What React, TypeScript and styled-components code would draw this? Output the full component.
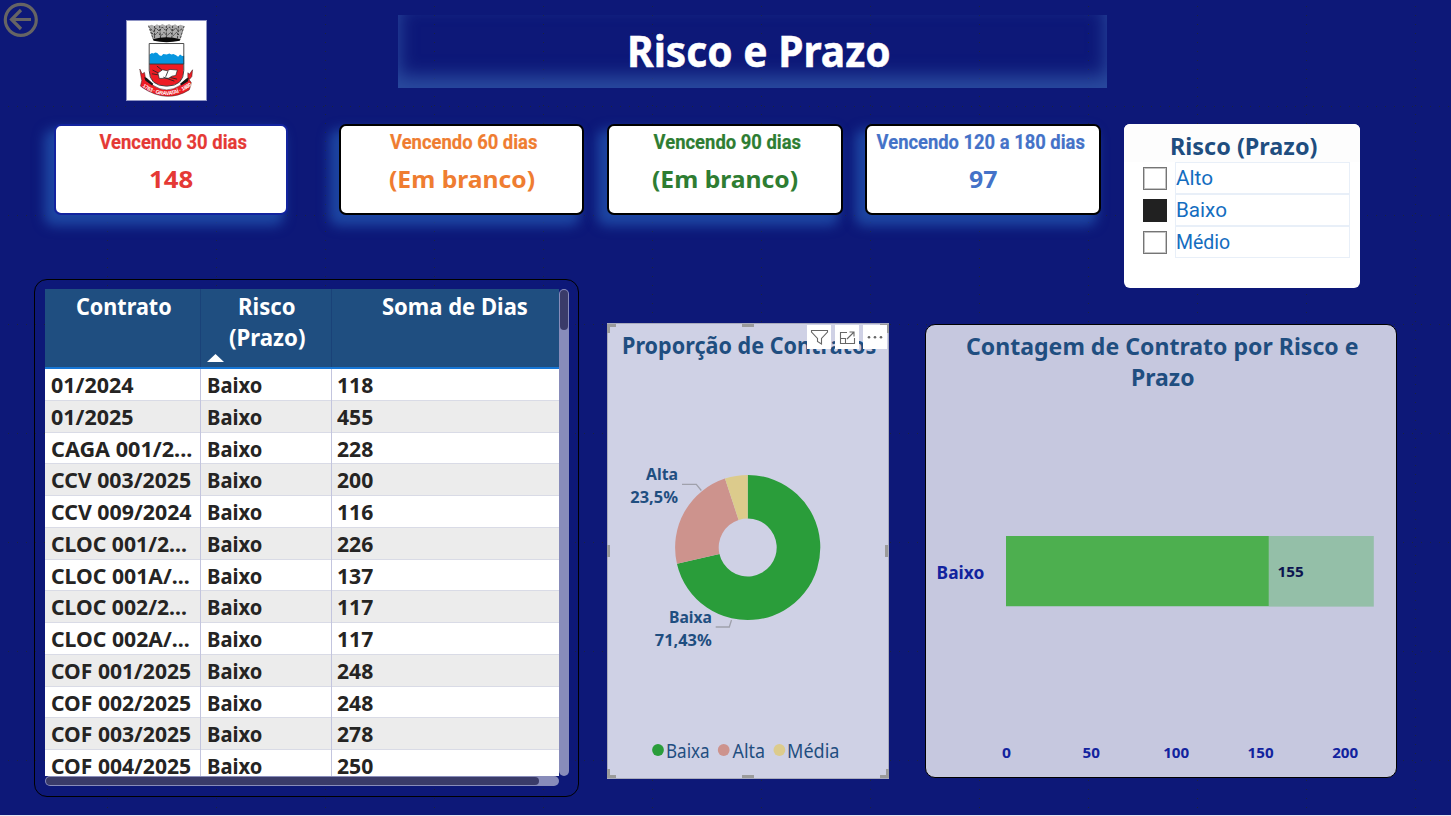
import React, { useLayoutEffect, useRef, useState } from "react";
import styled, { createGlobalStyle } from "styled-components";

const SANS = `"Noto Sans", "Open Sans", sans-serif`;
const DIN = `Roboto, "Liberation Sans", sans-serif`;

const GlobalStyle = createGlobalStyle`
  *, *::before, *::after { box-sizing: border-box; }
  body { margin: 0; font-family: ${SANS}; background: #0d1878; }
`;

/* ---------- text that fills a given width ---------- */

const FitBox = styled.span<{ $w: number }>`
  display: inline-block;
  width: ${(p) => p.$w}px;
  text-align: left;
  white-space: nowrap;
  vertical-align: top;
`;
const FitInner = styled.span`
  display: inline-block;
  transform-origin: 0 50%;
`;

function Fit({ w, children }: { w: number; children: React.ReactNode }) {
  const ref = useRef<HTMLSpanElement>(null);
  const [scale, setScale] = useState(1);
  useLayoutEffect(() => {
    if (ref.current) setScale(w / ref.current.offsetWidth);
  }, [w]);
  return (
    <FitBox $w={w}>
      <FitInner ref={ref} style={{ transform: `scaleX(${scale})` }}>
        {children}
      </FitInner>
    </FitBox>
  );
}

/* ---------- page ---------- */

const Page = styled.main`
  width: 1451px;
  height: 816px;
  overflow: hidden;
  display: flex;
  flex-direction: column;
  border-bottom: 1px solid #e6e6f0;
  background-color: #0d1878;
  background-image: radial-gradient(circle at 0.5px 0.5px, #1a2240 0.9px, transparent 1px),
    radial-gradient(circle at 0.5px 0.5px, #1a2240 0.9px, transparent 1px);
  background-size: 109px 9px, 9px 109px;
  background-position: 107px 6px, 8px 106px;
`;

const Header = styled.header`
  display: flex;
  align-items: flex-start;
  height: 124px;
  flex: none;
`;
const BackButton = styled.button`
  margin: 2px 0 0 3px;
  padding: 0;
  border: 0;
  background: none;
  width: 36px;
  height: 36px;
  svg { display: block; }
`;
const LogoBox = styled.div`
  margin: 20px 0 0 87px;
  width: 81px;
  height: 81px;
  background: #fff;
  border: 1px solid #8f94c4;
  svg { display: block; margin: -1px; }
`;
const TitleBanner = styled.h1`
  margin: 15px 0 0 191px;
  width: 709px;
  height: 73px;
  padding-left: 12px;
  text-align: center;
  color: #fff;
  font-size: 42.2px;
  font-weight: 700;
  line-height: 71px;
  -webkit-text-stroke: 0.5px #fff;
  box-shadow: inset 0 -11px 18px 1px #2a4b9f;
`;

/* ---------- indicator cards ---------- */

const TopRow = styled.section`
  display: flex;
  align-items: flex-start;
  gap: 23px;
  height: 155px;
  padding-left: 54px;
  flex: none;
`;
const Card = styled.article<{ $w: number; $color: string; $edge: string; $after?: number }>`
  width: ${(p) => p.$w}px;
  height: 91px;
  margin-right: ${(p) => p.$after ?? 0}px;
  border: 2px solid ${(p) => p.$edge};
  border-radius: 7px;
  background: #fff;
  color: ${(p) => p.$color};
  text-align: center;
  box-shadow: -7px 8px 12px 3px #1d45a2;
`;
const CardTitle = styled.div<{ $shift: number }>`
  font: 700 20px/32px ${DIN};
  transform: translateX(${(p) => p.$shift}px);
  -webkit-text-stroke: 0.2px currentColor;
`;
const CardValue = styled.div`
  font-size: 24px;
  font-weight: 700;
  line-height: 42px;
`;

/* ---------- slicer ---------- */

const Slicer = styled.aside`
  width: 236px;
  height: 164px;
  border-radius: 6px;
  overflow: hidden;
  background: #fff;
`;
const SlicerTitle = styled.div`
  height: 38px;
  padding-left: 4px;
  background: #fdfdfd;
  text-align: center;
  color: #1f4e80;
  font-size: 23.5px;
  font-weight: 700;
  line-height: 44px;
`;
const Option = styled.label`
  display: flex;
  align-items: center;
  height: 32px;
  padding-left: 19px;
`;
const Check = styled.span<{ $on?: boolean }>`
  width: 23.5px;
  height: 23px;
  margin-right: 8.5px;
  border: ${(p) => (p.$on ? 0 : 1)}px solid #757575;
  box-shadow: ${(p) => (p.$on ? "none" : "inset 0 0 0 1px #c4c4c4")};
  background: ${(p) => (p.$on ? "#212121" : "#fff")};
`;
const OptionText = styled.span`
  width: 175px;
  height: 32px;
  border: 1px solid #e8eff8;
  color: #146dbf;
  font: 400 20px/31px ${DIN};
`;

/* ---------- lower row ---------- */

const BottomRow = styled.section`
  display: flex;
  align-items: flex-start;
  padding-left: 34px;
`;
const TablePanel = styled.div`
  width: 545px;
  height: 518px;
  padding: 9px 0 0 10px;
  border: 1px solid #000;
  border-radius: 13px;
`;
const TableRow = styled.div`
  display: flex;
`;
const Grid = styled.div`
  width: 513.5px;
  height: 487px;
  overflow: hidden;
`;
const GridHead = styled.div`
  display: grid;
  grid-template-columns: 156px 131px 227px;
  height: 80px;
  background: #1f4e80;
  border-bottom: 2px solid #1676d6;
`;
const HeadCell = styled.div<{ $pad?: number }>`
  position: relative;
  padding-top: 2px;
  padding-left: ${(p) => p.$pad ?? 2}px;
  border-right: 1px solid #1a4278;
  text-align: center;
  color: #fff;
  font-size: 22.4px;
  font-weight: 700;
  line-height: 31px;
  &:last-child { border-right: 0; }
`;
const SortMark = styled.svg`
  position: absolute;
  left: 6px;
  top: 65px;
`;
const GridLine = styled.div<{ $alt: boolean }>`
  display: grid;
  grid-template-columns: 156px 131px 227px;
  height: 31.77px;
  background: ${(p) => (p.$alt ? "#ececec" : "#fff")};
  border-bottom: 1px solid #d9dbe6;
`;
const Cell = styled.div`
  padding-left: 5.6px;
  border-right: 1px solid #c3c5de;
  color: #252423;
  font-size: 20.8px;
  font-weight: 700;
  line-height: 32px;
  &:last-child { border-right: 0; padding-left: 5px; }
`;
const VTrack = styled.div`
  width: 10px;
  height: 487px;
  padding: 1px;
  border-radius: 5px;
  background: #888cba;
`;
const VThumb = styled.div`
  height: 40px;
  border-radius: 4px;
  background: #3a3b69;
`;
const HTrack = styled.div`
  width: 514px;
  height: 10px;
  padding: 1px;
  border-radius: 5px;
  background: #888cba;
`;
const HThumb = styled.div`
  width: 493px;
  height: 8px;
  border-radius: 4px;
  background: #3a3b69;
`;

const DonutPanel = styled.div`
  position: relative;
  margin: 44px 0 0 28px;
  width: 282px;
  height: 456px;
  background: #cfd1e5;
  border: 1px solid #a9abbd;
`;
const PanelTitle = styled.h2<{ $top: number; $left: number }>`
  margin: 0;
  padding: ${(p) => p.$top}px 0 0 ${(p) => p.$left}px;
  text-align: center;
  color: #1f4e80;
  font-size: 22.6px;
  font-weight: 700;
  line-height: 31px;
`;
const Overlay = styled.svg`
  position: absolute;
  left: -1px;
  top: -1px;
`;
const Tools = styled.div`
  position: absolute;
  right: 1px;
  top: 1px;
  display: flex;
  gap: 4px;
`;
const Tool = styled.button`
  width: 24px;
  height: 24px;
  padding: 0;
  border: 0;
  background: #fff;
  svg { display: block; }
`;
const BarPanel = styled.div`
  position: relative;
  margin: 45px 0 0 36px;
  width: 472px;
  height: 454px;
  background: #c6c8df;
  border: 1px solid #000;
  border-radius: 10px;
`;

/* ---------- drawings ---------- */

const Crest = () => (
  <svg width="81" height="81" viewBox="0 0 241 241">
    <path d="M67 17 L77 14 L84 18 L92 13 L100 17 L108 12 L118 17 L128 12 L137 17 L146 13 L154 18 L162 14 L173 18 L162 57 Q120 70 80 57Z" fill="#adadad" />
    <path d="M72 26l10 8 7-10 10 9 9-12 10 10 11-10 9 12 10-9 8 10 11-8M76 38l9 8 9-9 10 10 9-10 9 10 10-10 9 9 9-9 8 8M85 18v36M100 17l3 40M120 17v42M139 17l-3 40M156 18l-3 37M67 17l14 40M173 18l-12 39" stroke="#222" strokeWidth="2.4" fill="none" strokeDasharray="7 3" />
    <path d="M80 57 Q120 46 162 57 L160 62 Q120 70 82 62Z" fill="#080808" />
    <path d="M69 70H172V150Q172 196 121 197Q69 196 69 150Z" fill="#fff" />
    <path d="M70 103l7-5 5 2 5-3 6 1 6 7 6 2 6-6 10 2 8-3 6 3 6-2 8 4 6 4 6-6 6 4 6-1V131H70Z" fill="#0796df" />
    <path d="M70 131H171V150Q171 195 121 196Q70 195 70 150Z" fill="#ed1c24" />
    <path d="M69 131H172M69 70H172V150Q172 196 121 197Q69 196 69 150Z" fill="none" stroke="#333" strokeWidth="2.6" />
    <path d="M95 158l14-10 14 3 8-4 22 2-5 16-11 2-10 6-28 1Z" fill="#fff" stroke="#222" strokeWidth="2" />
    <path d="M79 149l16 8M77 160l18 3M92 137l15 12M111 170l33 12M125 152l-7 17M132 171l20 5" stroke="#222" strokeWidth="2.5" />
    <path d="M41 146l7 14 7-4 3 17 14 12 8 9 Q121 222 162 194 L170 185 184 173l0-16 5 4 9-13-2 20-8 10 6 8-1 8-5 14 Q121 250 47 200l-4-4 4-16-2-10Z" fill="#ed1c24" stroke="#3a1a1a" strokeWidth="1.5" />
    <path d="M54 170l7 2 20 18-3 5-20-14ZM187 171l-7 3-19 16 3 5 20-12Z" fill="#161616" />
    <path id="ribbon" d="M46 196Q121 251 196 194" fill="none" />
    <text fill="#fff" fontFamily="Liberation Sans, sans-serif" fontSize="16" fontWeight="700">
      <textPath href="#ribbon" startOffset="3" textLength="160">1763 · GRAVATAÍ · 1880</textPath>
    </text>
  </svg>
);

type LabelProps = { x: number; y: number; w: number; size: number; fill?: string; weight?: number; children: string };
const Label = ({ x, y, w, size, fill = "#1f4e80", weight = 700, children }: LabelProps) => (
  <text x={x} y={y} textLength={w} lengthAdjust="spacingAndGlyphs" fontSize={size} fontWeight={weight} fill={fill} fontFamily='"Noto Sans", "Open Sans", sans-serif'>
    {children}
  </text>
);

const CX = 140.7;
const CY = 224.5;
function slice(from: number, to: number) {
  const R = 72.6;
  const r = 29;
  const at = (t: number, q: number) => `${CX + q * Math.sin(t * 2 * Math.PI)} ${CY - q * Math.cos(t * 2 * Math.PI)}`;
  const big = to - from > 0.5 ? 1 : 0;
  return `M${at(from, R)}A${R} ${R} 0 ${big} 1 ${at(to, R)}L${at(to, r)}A${r} ${r} 0 ${big} 0 ${at(from, r)}Z`;
}

const Donut = () => (
  <Overlay width="282" height="456">
    <path d={slice(0, 0.7143)} fill="#2a9d3a" />
    <path d={slice(0.7143, 0.9493)} fill="#cd938d" />
    <path d={slice(0.9493, 1)} fill="#dccb8c" />
    <path d="M75 161.3H89.3L94.3 167.5M108.7 304H122.3L124.5 297" fill="none" stroke="#a0a1ac" strokeWidth="1.3" />
    <Label x={39} y={157} w={32} size={16}>Alta</Label>
    <Label x={23.3} y={179.6} w={47.7} size={16}>23,5%</Label>
    <Label x={62} y={300} w={43} size={16}>Baixa</Label>
    <Label x={47.8} y={322.8} w={57} size={16}>71,43%</Label>
    <circle cx="51" cy="427" r="5.9" fill="#2a9d3a" />
    <circle cx="116.7" cy="427" r="5.9" fill="#cd938d" />
    <circle cx="172.4" cy="427" r="5.9" fill="#dccb8c" />
    <Label x={59} y={435.3} w={43.6} size={19.8} weight={400}>Baixa</Label>
    <Label x={125.5} y={435.3} w={32.5} size={19.8} weight={400}>Alta</Label>
    <Label x={180} y={435.3} w={52.5} size={19.8} weight={400}>Média</Label>
    <g fill="none" stroke="#9b9b9b" strokeWidth="3">
      <path d="M1.5 10V2.5H9M273 2.5H280.5V10M1.5 446V453.5H9M273 453.5H280.5V446" />
      <path d="M135 2.5H147M135 453.5H147M1.5 222V234M279.5 222V234" />
    </g>
  </Overlay>
);

const AXIS: [string, number, number][] = [
  ["0", 77, 9],
  ["50", 157.6, 17.4],
  ["100", 238.2, 26],
  ["150", 322.6, 26],
  ["200", 407.2, 26],
];
const Bars = () => (
  <Overlay width="472" height="454">
    <rect x="81" y="212" width="367.8" height="70.6" fill="#94bfa8" />
    <rect x="81" y="212" width="262.7" height="70" fill="#4daf4f" />
    <Label x={11.6} y={255} w={47.7} size={17.6} fill="#12239e">Baixo</Label>
    <Label x={352.4} y={253} w={26.3} size={15} fill="#0c1450">155</Label>
    {AXIS.map(([t, x, w]) => (
      <Label key={t} x={x} y={433.8} w={w} size={14.6} fill="#12239e">{t}</Label>
    ))}
  </Overlay>
);

/* ---------- data ---------- */

const ROWS: [string, number, string][] = [
  ["01/2024", 82.6, "118"],
  ["01/2025", 82.6, "455"],
  ["CAGA 001/2...", 141.4, "228"],
  ["CCV 003/2025", 140, "200"],
  ["CCV 009/2024", 140.4, "116"],
  ["CLOC 001/2...", 136.4, "226"],
  ["CLOC 001A/...", 138.6, "137"],
  ["CLOC 002/2...", 136.4, "117"],
  ["CLOC 002A/...", 138.6, "117"],
  ["COF 001/2025", 140, "248"],
  ["COF 002/2025", 140, "248"],
  ["COF 003/2025", 140, "278"],
  ["COF 004/2025", 140, "250"],
];

export default function App() {
  return (
    <Page>
      <GlobalStyle />
      <Header>
        <BackButton aria-label="Voltar">
          <svg width="36" height="36" fill="none" stroke="#666464" strokeWidth="3.2">
            <circle cx="17.8" cy="17.8" r="15.5" />
            <path d="M28 17.5H8.5M18 8L8.5 17.5L18 27" />
          </svg>
        </BackButton>
        <LogoBox><Crest /></LogoBox>
        <TitleBanner><Fit w={263.4}>Risco e Prazo</Fit></TitleBanner>
      </Header>

      <TopRow>
        <Card $w={234} $color="#e53935" $edge="#12239e" $after={28}>
          <CardTitle $shift={2.4}><Fit w={147.4}>Vencendo 30 dias</Fit></CardTitle>
          <CardValue><Fit w={44}>148</Fit></CardValue>
        </Card>
        <Card $w={245} $color="#ef7d31" $edge="#000">
          <CardTitle $shift={2}><Fit w={147.4}>Vencendo 60 dias</Fit></CardTitle>
          <CardValue><Fit w={146}>(Em branco)</Fit></CardValue>
        </Card>
        <Card $w={236} $color="#2e7d32" $edge="#000" $after={-1}>
          <CardTitle $shift={2.6}><Fit w={147.4}>Vencendo 90 dias</Fit></CardTitle>
          <CardValue><Fit w={146}>(Em branco)</Fit></CardValue>
        </Card>
        <Card $w={236} $color="#4472c8" $edge="#000">
          <CardTitle $shift={-2.4}><Fit w={208.6}>Vencendo 120 a 180 dias</Fit></CardTitle>
          <CardValue><Fit w={28}>97</Fit></CardValue>
        </Card>
        <Slicer>
          <SlicerTitle><Fit w={147.4}>Risco (Prazo)</Fit></SlicerTitle>
          <Option><Check /><OptionText><Fit w={37.4}>Alto</Fit></OptionText></Option>
          <Option><Check $on /><OptionText><Fit w={50.6}>Baixo</Fit></OptionText></Option>
          <Option><Check /><OptionText><Fit w={54.6}>Médio</Fit></OptionText></Option>
        </Slicer>
      </TopRow>

      <BottomRow>
        <TablePanel>
          <TableRow>
            <Grid>
              <GridHead>
                <HeadCell><Fit w={95.4}>Contrato</Fit></HeadCell>
                <HeadCell $pad={2}>
                  <Fit w={57.4}>Risco</Fit><br /><Fit w={76.4}>(Prazo)</Fit>
                  <SortMark width="17" height="8"><path d="M0 8L8.5 0L17 8Z" fill="#fff" /></SortMark>
                </HeadCell>
                <HeadCell $pad={18}><Fit w={145.4}>Soma de Dias</Fit></HeadCell>
              </GridHead>
              {ROWS.map(([name, w, days], i) => (
                <GridLine key={name} $alt={i % 2 === 1}>
                  <Cell><Fit w={w}>{name}</Fit></Cell>
                  <Cell><Fit w={55.2}>Baixo</Fit></Cell>
                  <Cell><Fit w={36.6}>{days}</Fit></Cell>
                </GridLine>
              ))}
            </Grid>
            <VTrack><VThumb /></VTrack>
          </TableRow>
          <HTrack><HThumb /></HTrack>
        </TablePanel>

        <DonutPanel>
          <PanelTitle $top={6} $left={2}><Fit w={254}>Proporção de Contratos</Fit></PanelTitle>
          <Donut />
          <Tools>
            <Tool aria-label="Filtros">
              <svg width="24" height="24" fill="none" stroke="#666" strokeWidth="1.1">
                <path d="M4.5 5.5H20.5V7L14.5 13.5V19L10.5 16.5V13.5L4.5 7Z" />
              </svg>
            </Tool>
            <Tool aria-label="Modo de foco">
              <svg width="24" height="24" fill="none" stroke="#666" strokeWidth="1.1">
                <path d="M12 7.5H5.5V18.5H19.5V13M5.5 13.5H10.5V18.5M12 14L18.5 7.5M14.5 7H19V11.5" />
              </svg>
            </Tool>
            <Tool aria-label="Mais opções">
              <svg width="24" height="24" fill="#666">
                <circle cx="6" cy="12.3" r="1.3" /><circle cx="12" cy="12.3" r="1.3" /><circle cx="18" cy="12.3" r="1.3" />
              </svg>
            </Tool>
          </Tools>
        </DonutPanel>

        <BarPanel>
          <PanelTitle $top={6} $left={2}>
            <Fit w={393}>Contagem de Contrato por Risco e</Fit><br /><Fit w={63}>Prazo</Fit>
          </PanelTitle>
          <Bars />
        </BarPanel>
      </BottomRow>
    </Page>
  );
}
